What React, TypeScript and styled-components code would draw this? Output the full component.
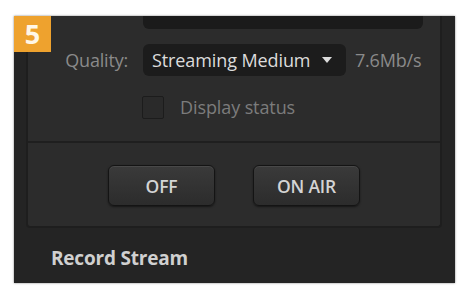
import React from 'react';
import styled, { createGlobalStyle } from 'styled-components';

const GlobalStyle = createGlobalStyle`
  html, body {
    margin: 0;
    padding: 0;
    background: #ffffff;
  }
  body {
    font-family: 'Open Sans', 'Liberation Sans', sans-serif;
  }
`;

const Page = styled.div`
  width: 465px;
  height: 287px;
  padding: 16px 0 0 14px;
  box-sizing: border-box;
`;

const Frame = styled.div`
  position: relative;
  width: 441px;
  height: 267px;
  background: #242424;
  box-shadow: 0 0 2px rgba(0, 0, 0, 0.5);
  display: flex;
  flex-direction: column;
  overflow: hidden;
`;

const Badge = styled.div`
  position: absolute;
  left: 0;
  top: 0;
  width: 37px;
  height: 36px;
  background: #eea22e;
  color: #fff7e8;
  font-weight: 700;
  font-size: 27px;
  line-height: 36px;
  text-align: center;
`;

const InnerPanel = styled.div`
  margin: 0 13px 0 12px;
  background: #2c2c2c;
  border: 2px solid #1e1e1e;
  border-top: none;
  border-radius: 0 0 4px 4px;
`;

const Settings = styled.div`
  padding-bottom: 23px;
  border-bottom: 2px solid #1f1f1f;
  display: flex;
  flex-direction: column;
`;

const TopField = styled.div`
  margin-left: 115px;
  width: 280px;
  height: 13px;
  background: #1b1b1b;
  border-radius: 0 0 6px 6px;
`;

const QualityRow = styled.div`
  margin-top: 15px;
  display: grid;
  grid-template-columns: 100px 203px auto;
  column-gap: 15px;
  align-items: center;
`;

const Label = styled.span`
  text-align: right;
  color: #8a8a8a;
  font-size: 18px;
  letter-spacing: -0.2px;
`;

const Select = styled.div`
  height: 32px;
  box-sizing: border-box;
  padding: 0 14px 0 9px;
  background: #1c1c1c;
  border-radius: 6px;
  display: flex;
  align-items: center;
  justify-content: space-between;
  color: #dcdcdc;
  font-size: 18px;
  letter-spacing: -0.1px;
`;

const Caret = styled.span`
  width: 0;
  height: 0;
  border-left: 5px solid transparent;
  border-right: 5px solid transparent;
  border-top: 6px solid #dcdcdc;
`;

const Rate = styled.span`
  margin-left: -6px;
  color: #8a8a8a;
  font-size: 18px;
  letter-spacing: -0.2px;
`;

const CheckRow = styled.label`
  margin: 20px 0 0 114px;
  display: flex;
  align-items: center;
  gap: 16px;
  height: 22px;
  color: #7c7c7c;
  font-size: 18px;
  letter-spacing: -0.1px;
`;

const CheckBox = styled.span`
  width: 20px;
  height: 21px;
  background: #2a2a2a;
  border: 1px solid #1c1c1c;
  border-radius: 2px;
`;

const ButtonRow = styled.div`
  padding: 22px 0 20px;
  display: flex;
  justify-content: center;
  gap: 38px;
`;

const Button = styled.button`
  width: 107px;
  height: 41px;
  border: 1px solid #141414;
  border-radius: 6px;
  background: linear-gradient(#3a3a3a, #2c2c2c);
  box-shadow: inset 0 1px 0 rgba(255, 255, 255, 0.08), 0 1px 2px rgba(0, 0, 0, 0.5);
  color: #d4d4d4;
  font-family: 'Open Sans', 'Liberation Sans', sans-serif;
  font-weight: 600;
  font-size: 17.5px;
  letter-spacing: -0.2px;
`;

const SectionTitle = styled.div`
  padding: 17px 0 0 37px;
  color: #d0d0d0;
  font-weight: 700;
  font-size: 19px;
  line-height: 26px;
  letter-spacing: -0.2px;
`;

export default function App() {
  return (
    <>
      <GlobalStyle />
      <Page>
        <Frame>
          <InnerPanel>
            <Settings>
              <TopField />
              <QualityRow>
                <Label>Quality:</Label>
                <Select>
                  <span>Streaming Medium</span>
                  <Caret />
                </Select>
                <Rate>7.6Mb/s</Rate>
              </QualityRow>
              <CheckRow>
                <CheckBox />
                Display status
              </CheckRow>
            </Settings>
            <ButtonRow>
              <Button>OFF</Button>
              <Button>ON AIR</Button>
            </ButtonRow>
          </InnerPanel>
          <SectionTitle>Record Stream</SectionTitle>
          <Badge>5</Badge>
        </Frame>
      </Page>
    </>
  );
}
